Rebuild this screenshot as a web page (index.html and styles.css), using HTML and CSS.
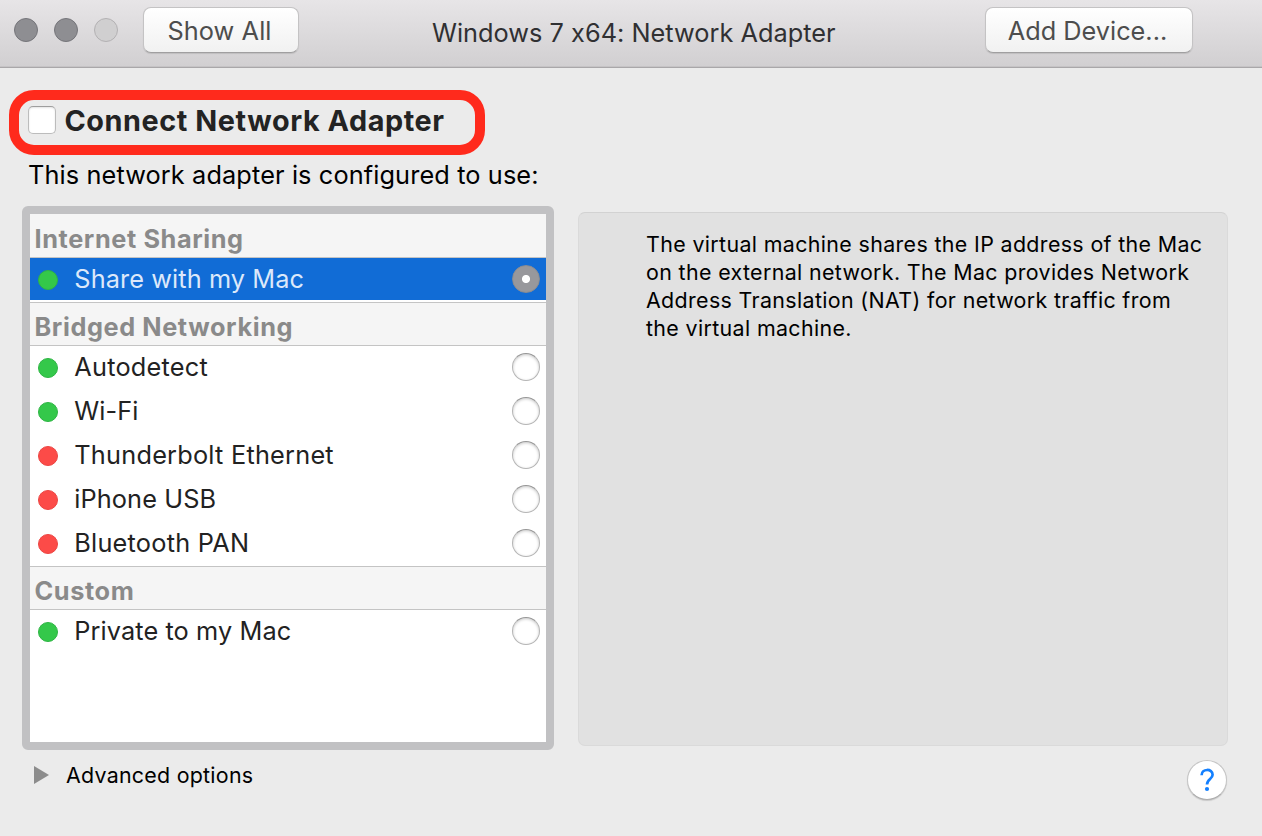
FILE: index.html
```html
<!DOCTYPE html>
<html lang="en">
<head>
<meta charset="utf-8">
<title>Windows 7 x64: Network Adapter</title>
<link rel="stylesheet" href="styles.css">
</head>
<body>
<header class="titlebar">
  <div class="lights"><i class="light"></i><i class="light"></i><i class="light light-off"></i></div>
  <button class="button show-all">Show All</button>
  <h1 class="title">Windows 7 x64: Network Adapter</h1>
  <button class="button add-device">Add Device...</button>
</header>
<main class="content">
  <label class="connect"><span class="checkbox"></span><span class="connect-text">Connect Network Adapter</span></label>
  <p class="hint">This network adapter is configured to use:</p>
  <div class="columns">
    <div class="list">
      <h2 class="group">Internet Sharing</h2>
      <div class="row selected"><i class="dot"></i><span class="name">Share with my Mac</span><i class="radio"></i></div>
      <h2 class="group ruled">Bridged Networking</h2>
      <div class="row"><i class="dot"></i><span class="name wide">Autodetect</span><i class="radio"></i></div>
      <div class="row"><i class="dot"></i><span class="name">Wi-Fi</span><i class="radio"></i></div>
      <div class="row"><i class="dot down"></i><span class="name wide">Thunderbolt Ethernet</span><i class="radio"></i></div>
      <div class="row"><i class="dot down"></i><span class="name">iPhone USB</span><i class="radio"></i></div>
      <div class="row"><i class="dot down"></i><span class="name wide">Bluetooth PAN</span><i class="radio"></i></div>
      <h2 class="group ruled">Custom</h2>
      <div class="row"><i class="dot"></i><span class="name">Private to my Mac</span><i class="radio"></i></div>
    </div>
    <p class="info">The virtual machine shares the IP address of the Mac<br>on the external network. The Mac provides Network<br>Address Translation (NAT) for network traffic from<br>the virtual machine.</p>
  </div>
  <footer class="footer">
    <div class="advanced"><svg class="triangle" width="15" height="18" viewBox="0 0 15 18"><path d="M0 0L15 9L0 18Z" fill="#8c8c8c"/></svg><span>Advanced options</span></div>
    <button class="help" aria-label="Help"><svg width="40" height="40" viewBox="0 0 40 40"><path d="M14.6 15.2C14.6 8.3 25.6 8.3 25.6 14.8C25.6 19.1 20 19 20 24.6" fill="none" stroke="#1480ff" stroke-width="2.7"/><circle cx="20" cy="29" r="2.1" fill="#1480ff"/></svg></button>
  </footer>
</main>
</body>
</html>
```
FILE: styles.css
```css
* { box-sizing: border-box; }
body {
  margin: 0;
  height: 836px;
  overflow: hidden;
  background: #ebebeb;
  color: #000;
  font: 25.3px/30px Inter, "Liberation Sans", sans-serif;
  font-feature-settings: "calt" 0;
}
h1, h2, p { margin: 0; font-size: inherit; font-weight: 400; white-space: nowrap; }
button { font: inherit; font-feature-settings: inherit; padding: 0; }

.titlebar {
  display: flex;
  align-items: flex-start;
  height: 68px;
  padding: 7px 69px 0 14px;
  background: linear-gradient(#e7e5e7, #d1cfd1);
  border-bottom: 1px solid #a9a7a9;
  box-shadow: inset 0 -1px #c5c3c5;
}
.lights { display: flex; gap: 16px; padding-top: 11px; }
.light { width: 24px; height: 24px; border: 1px solid #75757a; border-radius: 50%; background: #8e8e92; }
.light-off { border-color: #b3b1b3; background: #d0cfd0; }
.button {
  height: 46px;
  padding: 2px 3px 0 0;
  border: 1px solid #c4c3c4;
  border-bottom-color: #a09fa0;
  border-radius: 8px;
  background: linear-gradient(#fff, #f1f1f1);
  box-shadow: 0 1px 1px #0000001a;
  color: #4d4d4d;
}
.show-all { width: 156px; margin-left: 25px; letter-spacing: 0.1px; }
.title { flex: 1; padding: 11px 0 0 133px; letter-spacing: 0.03px; color: #303032; }
.add-device { width: 208px; }

.content { padding: 22px 34px 0 9px; }
.connect {
  display: flex;
  width: 476px;
  height: 65px;
  padding: 6px 0 0 9px;
  border: 10px solid #ff2a1c;
  border-radius: 25px;
}
.checkbox {
  width: 28px;
  height: 28px;
  border: 1px solid #bcbcbc;
  border-top-color: #9e9e9e;
  border-radius: 5px;
  background: #fff;
  box-shadow: inset 0 1px 2px #0000001c;
}
.connect-text {
  margin-left: 8.5px;
  font-size: 28.8px;
  font-weight: 700;
  letter-spacing: 0.57px;
  color: #232323;
  white-space: nowrap;
}
.hint { height: 51px; padding: 5px 0 0 19px; letter-spacing: 0.12px; }

.columns { display: flex; gap: 24px; padding-left: 13px; }
.list { width: 532px; height: 544px; border: 8px solid #c1c1c3; border-radius: 6px; background: #fff; }
.group {
  height: 44px;
  padding: 10px 0 0 4.5px;
  background: #f5f5f5;
  border-bottom: 1px solid #c4c4c4;
  font-weight: 700;
  letter-spacing: 0.6px;
  color: #8a8a8a;
}
.ruled { border-top: 1px solid #c4c4c4; padding-top: 9px; }
.row { display: flex; align-items: flex-start; height: 44px; padding: 6px 6px 0 8px; color: #222; }
.selected { height: 42px; margin-bottom: 2px; background: #116cd6; color: #dce8fa; }
.dot { width: 20px; height: 20px; margin-top: 6px; border: 1px solid #2eb544; border-radius: 50%; background: #34c84a; }
.down { border-color: #ec4643; background: #fc4b48; }
.name { flex: 1; margin-left: 16.3px; letter-spacing: 0.1px; white-space: nowrap; }
.wide { letter-spacing: 0.23px; }
.radio {
  width: 28px;
  height: 28px;
  margin-top: 1px;
  border: 1px solid #b5b5b5;
  border-top-color: #969696;
  border-radius: 50%;
  background: #fff;
  box-shadow: inset 0 1px 3px #00000038;
}
.selected .radio { border-color: #8c8c90; background: radial-gradient(circle, #fff 3.6px, #98989c 4.5px); box-shadow: none; }

.info {
  width: 650px;
  height: 534px;
  margin-top: 6px;
  padding: 17px 0 0 67px;
  border: 1px solid #dadada;
  border-top-color: #d2d2d2;
  border-radius: 7px;
  background: #e1e1e1;
  font-size: 21.4px;
  line-height: 28px;
  letter-spacing: 0.36px;
}
.footer { display: flex; justify-content: space-between; padding: 10px 1px 0 25px; }
.advanced { display: flex; gap: 17px; font-size: 21.4px; letter-spacing: 0.26px; }
.triangle { margin-top: 6px; }
.help {
  width: 40px;
  height: 40px;
  border: 1px solid #c5c5c5;
  border-bottom-color: #adadad;
  border-radius: 50%;
  background: #fff;
  box-shadow: 0 1px 1px #00000026;
}
.help svg { display: block; margin: -1px; }
```
